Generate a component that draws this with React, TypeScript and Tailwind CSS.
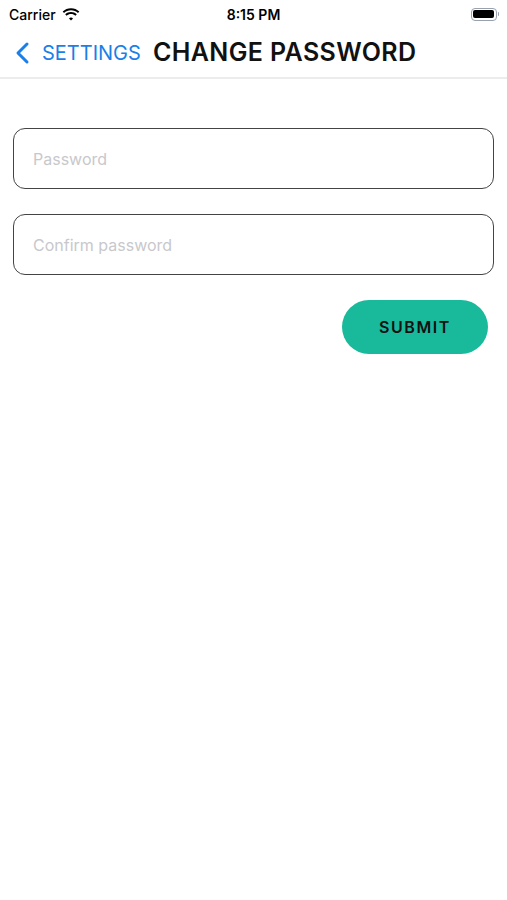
import React, { useState } from 'react';

const StatusBar = () => (
  <div className="relative flex h-[28px] items-center justify-between pl-[9px] pr-[8px] text-[14px] text-black">
    <div className="flex items-center gap-[6px]">
      <span className="font-medium">Carrier</span>
      <svg width="18" height="13" viewBox="0 0 18 13" fill="black">
        <path d="M9 2.2c2.7 0 5.1 1 7 2.7l1.3-1.4C15.1 1.4 12.2.2 9 .2S2.9 1.4.7 3.5L2 4.9C3.9 3.2 6.3 2.2 9 2.2z" />
        <path d="M9 6c1.7 0 3.2.6 4.4 1.7l1.4-1.4C13.2 4.8 11.2 4 9 4S4.8 4.8 3.2 6.3l1.4 1.4C5.8 6.6 7.3 6 9 6z" />
        <path d="M9 9.6c.8 0 1.5.3 2 .8L9 12.6l-2-2.2c.5-.5 1.2-.8 2-.8z" />
      </svg>
    </div>
    <span className="absolute left-1/2 -translate-x-1/2 font-semibold">8:15 PM</span>
    <div className="flex items-center">
      <div className="flex h-[13px] w-[26px] items-center rounded-[4px] border border-gray-400 p-[1.5px]">
        <div className="h-full w-full rounded-[2px] bg-black" />
      </div>
      <div className="ml-[1px] h-[4px] w-[1.5px] rounded-r bg-gray-400" />
    </div>
  </div>
);

const Field = ({ placeholder }: { placeholder: string }) => {
  const [value, setValue] = useState('');
  return (
    <input
      type="password"
      value={value}
      onChange={(e) => setValue(e.target.value)}
      placeholder={placeholder}
      className="h-[61px] w-full rounded-[12px] border-[1.5px] border-[#444] bg-white px-[19px] text-[16px] text-black outline-none placeholder:text-[#c8c8cc]"
    />
  );
};

export default function App() {
  return (
    <div
      className="min-h-[900px] w-[507px] bg-white"
      style={{ fontFamily: 'Inter, "Liberation Sans", Roboto, sans-serif' }}
    >
      <StatusBar />
      <div className="flex h-[51px] items-center border-b-[2px] border-[#ececec] pl-[14px]">
        <button className="flex items-center text-[#1a7fe8]">
          <svg width="18" height="24" viewBox="0 0 18 24" fill="none" stroke="currentColor" strokeWidth="3" strokeLinecap="round" strokeLinejoin="round">
            <path d="M13 3 4 12l9 9" />
          </svg>
          <span className="ml-[10px] text-[20px]">SETTINGS</span>
        </button>
        <h1 className="ml-[12px] text-[25px] font-semibold tracking-[0.4px] text-[#111]">CHANGE PASSWORD</h1>
      </div>

      <div className="flex flex-col gap-[25px] px-[13px] pt-[49px]">
        <Field placeholder="Password" />
        <Field placeholder="Confirm password" />
      </div>

      <div className="flex justify-end pr-[19px] pt-[25px]">
        <button className="h-[54px] w-[146px] rounded-full bg-[#19b99b] text-[16px] font-semibold tracking-[1.6px] text-[#111]">
          SUBMIT
        </button>
      </div>
    </div>
  );
}
